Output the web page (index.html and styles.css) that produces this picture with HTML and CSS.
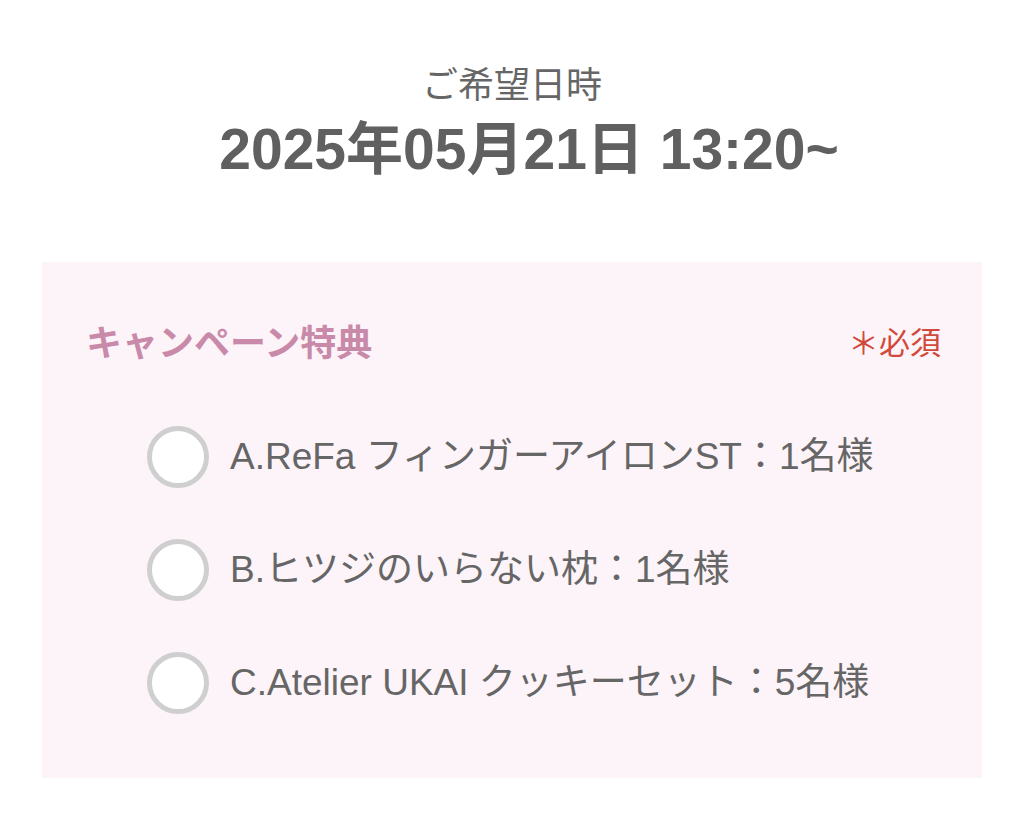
FILE: index.html
```html
<!DOCTYPE html>
<html lang="ja">
<head>
    <meta charset="UTF-8">
    <meta name="viewport" content="width=device-width, initial-scale=1.0">
    <title>キャンペーン特典</title>
    <link rel="stylesheet" href="styles.css">
</head>
<body>
    <div class="page">
        <div class="reserve">
            <p class="reserve-label">ご希望日時</p>
            <p class="reserve-date">2025年05月21日 13:20~</p>
        </div>

        <div class="panel">
            <div class="panel-head">
                <h2 class="panel-title">キャンペーン特典</h2>
                <span class="required">＊必須</span>
            </div>
            <div class="options">
                <label class="option">
                    <input type="radio" name="gift" value="a">
                    <span class="radio"></span>
                    <span class="option-text">A.ReFa フィンガーアイロンST：1名様</span>
                </label>
                <label class="option">
                    <input type="radio" name="gift" value="b">
                    <span class="radio"></span>
                    <span class="option-text">B.ヒツジのいらない枕：1名様</span>
                </label>
                <label class="option">
                    <input type="radio" name="gift" value="c">
                    <span class="radio"></span>
                    <span class="option-text">C.Atelier UKAI クッキーセット：5名様</span>
                </label>
            </div>
        </div>
    </div>
</body>
</html>
```

FILE: styles.css
```css
body {
    margin: 0;
    font-family: "Liberation Sans", "Noto Sans CJK JP", sans-serif;
    background: #fff;
    color: #666;
}
.page {
    padding: 64px 42px 0;
}
.reserve {
    text-align: center;
}
.reserve-label {
    margin: 0;
    font-size: 36px;
    line-height: 44px;
}
.reserve-date {
    margin: 9px 0 0;
    padding-left: 34px;
    font-size: 57px;
    line-height: 64px;
    font-weight: bold;
    color: #606060;
}
.panel {
    margin-top: 81px;
    background: #fdf4f9;
    padding: 60px 41px 64px 44px;
}
.panel-head {
    display: flex;
    justify-content: space-between;
    align-items: center;
}
.panel-title {
    margin: 0;
    font-size: 36px;
    line-height: 44px;
    font-weight: bold;
    color: #c98aa9;
}
.required {
    font-size: 31px;
    line-height: 44px;
    color: #d2493b;
}
.options {
    margin-top: 60px;
    padding-left: 61px;
    display: flex;
    flex-direction: column;
    gap: 51px;
}
.option {
    display: flex;
    align-items: center;
    gap: 21px;
    height: 62px;
    cursor: pointer;
}
.option input {
    display: none;
}
.radio {
    width: 52px;
    height: 52px;
    border: 5px solid #cfcfcf;
    border-radius: 50%;
    background: #fff;
    flex-shrink: 0;
}
.option-text {
    font-size: 37px;
    line-height: 50px;
    color: #666;
}
```
